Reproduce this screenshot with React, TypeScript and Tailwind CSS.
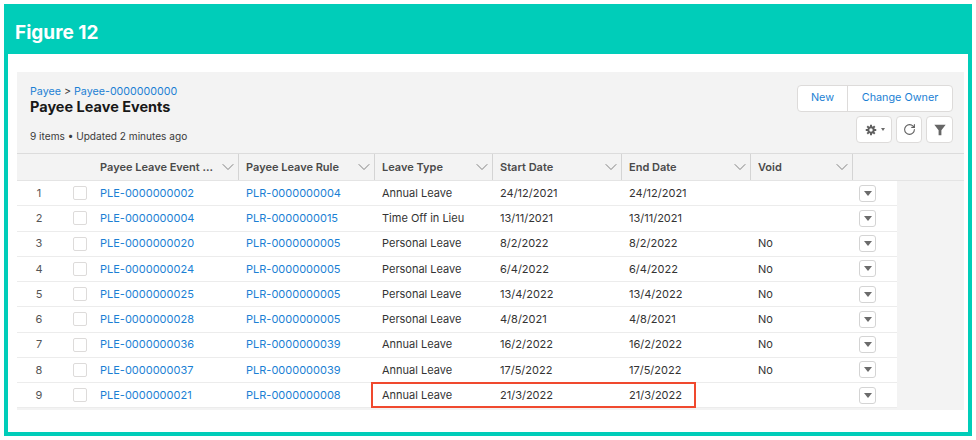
import { ChevronDown, RotateCw } from 'lucide-react'

const rows = [
  ['PLE-0000000002', 'PLR-0000000004', 'Annual Leave', '24/12/2021', '24/12/2021', ''],
  ['PLE-0000000004', 'PLR-0000000015', 'Time Off in Lieu', '13/11/2021', '13/11/2021', ''],
  ['PLE-0000000020', 'PLR-0000000005', 'Personal Leave', '8/2/2022', '8/2/2022', 'No'],
  ['PLE-0000000024', 'PLR-0000000005', 'Personal Leave', '6/4/2022', '6/4/2022', 'No'],
  ['PLE-0000000025', 'PLR-0000000005', 'Personal Leave', '13/4/2022', '13/4/2022', 'No'],
  ['PLE-0000000028', 'PLR-0000000005', 'Personal Leave', '4/8/2021', '4/8/2021', 'No'],
  ['PLE-0000000036', 'PLR-0000000039', 'Annual Leave', '16/2/2022', '16/2/2022', 'No'],
  ['PLE-0000000037', 'PLR-0000000039', 'Annual Leave', '17/5/2022', '17/5/2022', 'No'],
  ['PLE-0000000021', 'PLR-0000000008', 'Annual Leave', '21/3/2022', '21/3/2022', ''],
]

const columns = [
  { label: 'Payee Leave Event ...', width: 'w-[147px] pl-2' },
  { label: 'Payee Leave Rule', width: 'w-[136px] pl-[7px]' },
  { label: 'Leave Type', width: 'w-[118px] pl-[7px]' },
  { label: 'Start Date', width: 'w-[129px] pl-[7px]' },
  { label: 'End Date', width: 'w-[129px] pl-[7px]' },
  { label: 'Void', width: 'w-[102px] pl-[7px]' },
]

function Checkbox() {
  return <div className="w-[14px] h-[14px] rounded-[2px] bg-white border border-[#dddbda]" />
}

function RowAction() {
  return (
    <div className="w-[17px] h-[17px] rounded-[3px] bg-white border border-[#d4d4d4] flex items-center justify-center">
      <div className="w-0 h-0 border-l-[4.5px] border-r-[4.5px] border-t-[5px] border-l-transparent border-r-transparent border-t-[#6b6b6b]" />
    </div>
  )
}

function IconButton({ className, children }: { className: string; children: React.ReactNode }) {
  return (
    <div className={`h-[27px] rounded-[4px] bg-white border border-[#dddbda] flex items-center justify-center ${className}`}>
      {children}
    </div>
  )
}

export default function App() {
  return (
    <div className="w-[976px] h-[440px] bg-white p-1 font-['Inter',sans-serif]">
      <div className="w-[968px] h-[432px] bg-[#00cdb9] flex flex-col px-1 pb-1">
        <div className="h-[50px] shrink-0 flex items-center pl-[7px] pt-[8px] text-white text-[19px] font-bold">
          Figure 12
        </div>
        <div className="flex-1 bg-white pt-[18px] pl-[9px] pr-1">
          <div className="h-[338px] bg-[#f3f3f3]">
            <div className="h-[82px] flex justify-between pl-[13px] pr-[11px] pt-[13px] border-b border-[#dcdcdc]">
              <div>
                <div className="text-[10.7px] leading-[14px] text-[#3a3a3a]">
                  <span className="text-[#1b7fd4]">Payee</span> &gt; <span className="text-[#1b7fd4]">Payee-0000000000</span>
                </div>
                <div className="-mt-[1px] text-[14.5px] leading-[18px] font-bold text-[#181818]">Payee Leave Events</div>
                <div className="mt-[13px] text-[10.1px] leading-[14px] text-[#3a3a3a]">9 items • Updated 2 minutes ago</div>
              </div>
              <div className="flex flex-col items-end gap-[4px]">
                <div className="flex h-[27px] rounded-[4px] bg-white border border-[#dddbda] text-[10.8px] text-[#1b7fd4]">
                  <div className="w-[50px] flex items-center justify-center border-r border-[#dddbda]">New</div>
                  <div className="w-[104px] flex items-center justify-center">Change Owner</div>
                </div>
                <div className="flex gap-[4px]">
                  <IconButton className="w-[36px] gap-[4px] pl-[2px]">
                    <svg viewBox="0 0 16 16" className="w-[12px] h-[12px]" fill="none" stroke="#5f5f5f">
                      <circle cx="8" cy="8" r="3.6" strokeWidth="2.6" />
                      <path strokeWidth="2.6" d="M8 1v3M8 12v3M1 8h3M12 8h3M3 3l2.2 2.2M10.8 10.8 13 13M13 3l-2.2 2.2M5.2 10.8 3 13" />
                    </svg>
                    <div className="w-0 h-0 border-l-[2.5px] border-r-[2.5px] border-t-[3px] border-l-transparent border-r-transparent border-t-[#6b6b6b]" />
                  </IconButton>
                  <IconButton className="w-[26px]">
                    <RotateCw size={13} color="#5f5f5f" strokeWidth={2} />
                  </IconButton>
                  <IconButton className="w-[27px]">
                    <svg viewBox="0 0 16 16" className="w-[14px] h-[14px]" fill="#666666">
                      <path d="M1.5 2h13L9.6 8.2V14H6.4V8.2z" />
                    </svg>
                  </IconButton>
                </div>
              </div>
            </div>

            <div className="flex h-[27px] border-b border-[#e4e4e4] text-[11px] font-semibold text-[#4a4a4a]">
              <div className="w-[75px] shrink-0" />
              {columns.map(col => (
                <div key={col.label} className={`${col.width} shrink-0 flex items-center justify-between border-r-[1.5px] border-[#d4d4d4] whitespace-nowrap`}>
                  <span>{col.label}</span>
                  <ChevronDown size={20} color="#6b6b6b" strokeWidth={1} className="shrink-0" />
                </div>
              ))}
            </div>

            <div className="relative w-[880px]">
              {rows.map((row, i) => (
                <div key={row[0]} className="flex items-center h-[25.25px] bg-white border-b border-[#ececec] text-[11px] text-[#333333]">
                  <div className="w-[56px] shrink-0 text-center pr-[12px] text-[#555555]">{i + 1}</div>
                  <div className="w-[27px] shrink-0"><Checkbox /></div>
                  <div className="w-[146px] shrink-0 text-[#1b7fd4]">{row[0]}</div>
                  <div className="w-[136px] shrink-0 text-[#1b7fd4]">{row[1]}</div>
                  <div className="w-[118px] shrink-0">{row[2]}</div>
                  <div className="w-[129px] shrink-0">{row[3]}</div>
                  <div className="w-[129px] shrink-0">{row[4]}</div>
                  <div className="w-[101px] shrink-0">{row[5]}</div>
                  <RowAction />
                </div>
              ))}
              <div className="absolute left-[354px] bottom-0 w-[325px] h-[26px] border-2 border-[#f0492e]" />
            </div>
          </div>
        </div>
      </div>
    </div>
  )
}
